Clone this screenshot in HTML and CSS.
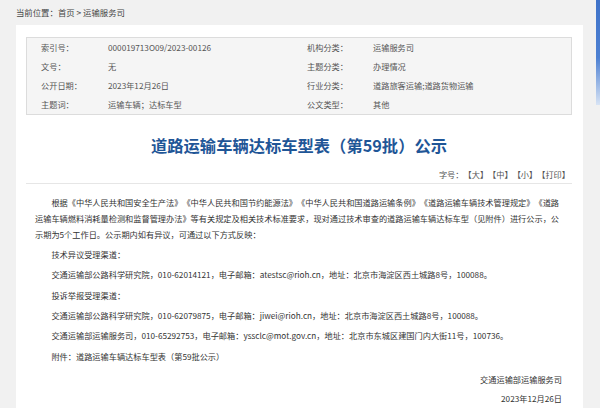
FILE: index.html
```html
<!DOCTYPE html>
<html lang="zh-CN">
<head>
    <meta charset="UTF-8">
    <meta name="viewport" content="width=device-width, initial-scale=1.0">
    <title>道路运输车辆达标车型表（第59批）公示</title>
    <link rel="stylesheet" href="styles.css">
</head>
<body>
    <!-- Breadcrumb -->
    <div class="crumb">当前位置：<a href="#">首页</a> &gt; <a href="#">运输服务司</a></div>

    <!-- Main panel -->
    <div class="panel">
        <!-- Info table -->
        <div class="info">
            <div class="info-row">
                <span class="lbl">索引号：</span><span class="val">000019713O09/2023-00126</span>
                <span class="lbl">机构分类：</span><span class="val">运输服务司</span>
            </div>
            <div class="info-row">
                <span class="lbl">文号：</span><span class="val">无</span>
                <span class="lbl">主题分类：</span><span class="val">办理情况</span>
            </div>
            <div class="info-row">
                <span class="lbl">公开日期：</span><span class="val">2023年12月26日</span>
                <span class="lbl">行业分类：</span><span class="val">道路旅客运输;道路货物运输</span>
            </div>
            <div class="info-row">
                <span class="lbl">主题词：</span><span class="val">运输车辆；达标车型</span>
                <span class="lbl">公文类型：</span><span class="val">其他</span>
            </div>
        </div>

        <h1 class="title">道路运输车辆达标车型表（第59批）公示</h1>

        <div class="tools">字号：<a href="#">【大】</a><a href="#">【中】</a><a href="#">【小】</a><a href="#">【打印】</a></div>

        <!-- Article -->
        <div class="article">
            <p class="indent">根据《中华人民共和国安全生产法》《中华人民共和国节约能源法》《中华人民共和国道路运输条例》《道路运输车辆技术管理规定》《道路运输车辆燃料消耗量检测和监督管理办法》等有关规定及相关技术标准要求，现对通过技术审查的道路运输车辆达标车型（见附件）进行公示，公示期为5个工作日。公示期内如有异议，可通过以下方式反映：</p>
            <p class="indent">技术异议受理渠道：</p>
            <p class="indent">交通运输部公路科学研究院，010-62014121，电子邮箱：atestsc@rioh.cn，地址：北京市海淀区西土城路8号，100088。</p>
            <p class="indent">投诉举报受理渠道：</p>
            <p class="indent">交通运输部公路科学研究院，010-62079875，电子邮箱：jiwei@rioh.cn，地址：北京市海淀区西土城路8号，100088。</p>
            <p class="indent">交通运输部运输服务司，010-65292753，电子邮箱：yssclc@mot.gov.cn，地址：北京市东城区建国门内大街11号，100736。</p>
            <p class="indent">附件：<a href="#">道路运输车辆达标车型表（第59批公示）</a></p>
            <p class="sign sign-first">交通运输部运输服务司</p>
            <p class="sign">2023年12月26日</p>
        </div>
    </div>

    <!-- Floating side tab -->
    <div class="side-tab"></div>
</body>
</html>
```

FILE: styles.css
```css
/* Reset styles */
* {
    margin: 0;
    padding: 0;
    box-sizing: border-box;
}

body {
    font-family: "Noto Sans CJK SC", "Microsoft YaHei", sans-serif;
    font-size: 8.2px;
    background-color: #f1f1f1;
    color: #333;
    text-spacing-trim: space-all;
}

a {
    color: inherit;
    text-decoration: none;
}

/* Breadcrumb */
.crumb {
    height: 25px;
    line-height: 25px;
    padding-left: 16px;
    font-size: 8.4px;
    color: #444;
}

/* Main panel */
.panel {
    background-color: #fff;
    margin: 0 17px 0 16px;
    padding: 11.5px 11px 20px 10px;
}

/* Info table */
.info {
    background-color: #f5f5f5;
    border: 1px solid #dcdcdc;
    color: #555;
}

.info-row {
    display: grid;
    grid-template-columns: 67px 199px 66px 1fr;
    padding-left: 14px;
    height: 19px;
    line-height: 19px;
}

/* Title */
.title {
    margin-top: 18px;
    font-size: 16.3px;
    line-height: 24px;
    font-weight: bold;
    color: #1f5697;
    text-align: center;
}

.tools {
    margin-top: 10px;
    line-height: 14px;
    padding: 0 2px 2px 0;
    text-align: right;
    color: #555;
    border-bottom: 1px solid #e6e6e6;
}

/* Article */
.article {
    width: 527px;
    padding-top: 10px;
    margin-left: 9px;
}

.article p {
    line-height: 16px;
    margin-bottom: 4.4px;
}

.article .indent {
    text-indent: 2em;
}

.article .sign {
    text-align: right;
    margin-bottom: 3px;
}

.article .sign-first {
    margin-top: 7px;
}

/* Floating side tab */
.side-tab {
    position: fixed;
    top: 0;
    right: 0;
    width: 4px;
    height: 105px;
    background: linear-gradient(to bottom, #3f73c9 0%, #4d80d2 55%, #d8e4f5 100%);
}
```
